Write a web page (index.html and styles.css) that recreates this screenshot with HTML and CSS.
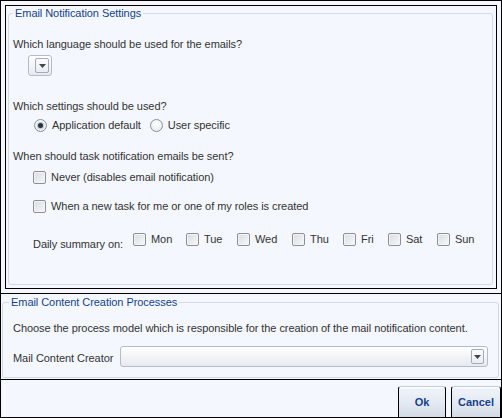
FILE: index.html
```html
<!DOCTYPE html>
<html>
<head>
<meta charset="utf-8">
<link rel="stylesheet" href="styles.css">
</head>
<body>
<div class="win">
  <div class="top">
    <div class="panel">
      <fieldset class="fs fs1">
        <legend>Email Notification Settings</legend>
        <div class="q q-lang">Which language should be used for the emails?</div>
        <div class="combo combo-small"><span class="trigger"><svg width="7" height="4" viewBox="0 0 7 4"><path d="M0 0h7L3.5 4z" fill="#444"/></svg></span></div>
        <div class="q q-settings">Which settings should be used?</div>
        <div class="radios">
          <label class="radio checked"><span class="rb"></span>Application default</label>
          <label class="radio"><span class="rb"></span>User specific</label>
        </div>
        <div class="q q-when">When should task notification emails be sent?</div>
        <label class="check c-never"><span class="cb"></span>Never (disables email notification)</label>
        <label class="check c-new"><span class="cb"></span>When a new task for me or one of my roles is created</label>
        <div class="daily">
          <span class="daily-label">Daily summary on:</span>
          <div class="days">
            <label class="check day"><span class="cb"></span>Mon</label>
            <label class="check day"><span class="cb"></span>Tue</label>
            <label class="check day"><span class="cb"></span>Wed</label>
            <label class="check day"><span class="cb"></span>Thu</label>
            <label class="check day"><span class="cb"></span>Fri</label>
            <label class="check day"><span class="cb"></span>Sat</label>
            <label class="check day"><span class="cb"></span>Sun</label>
          </div>
        </div>
      </fieldset>
    </div>
  </div>
  <div class="mid">
    <fieldset class="fs fs2">
      <legend>Email Content Creation Processes</legend>
      <div class="q q-choose">Choose the process model which is responsible for the creation of the mail notification content.</div>
      <div class="row-creator">
        <span class="lbl">Mail Content Creator</span>
        <div class="combo combo-wide"><span class="trigger"><svg width="7" height="4" viewBox="0 0 7 4"><path d="M0 0h7L3.5 4z" fill="#444"/></svg></span></div>
      </div>
    </fieldset>
  </div>
  <div class="foot">
    <button class="btn btn-ok">Ok</button>
    <button class="btn btn-cancel">Cancel</button>
  </div>
</div>
</body>
</html>
```

FILE: styles.css
```css
* { box-sizing: border-box; }
html, body { margin: 0; padding: 0; }
body {
  width: 502px;
  height: 418px;
  background: #f4f7fe;
  font-family: "Liberation Sans", Arial, sans-serif;
  font-size: 11px;
  letter-spacing: -0.06px;
  color: #333;
}
.win {
  width: 502px;
  height: 418px;
  border: 1px solid #000;
  background: #f4f7fe;
  display: flex;
  flex-direction: column;
}
.top {
  padding: 4px;
  border-bottom: 1px solid #000;
}
.panel {
  height: 284px;
  border: 1px solid #000;
  padding: 1px 3px 3px 2px;
  display: flex;
}
.fs {
  margin: 0;
  border: 1px solid #d3dae4;
  border-radius: 3px;
  min-width: 0;
}
.fs legend {
  color: #15428b;
  font-size: 11px;
  line-height: 12px;
  padding: 0 2px;
  margin-left: 0;
}
.fs1 {
  flex: 1;
  padding: 0 4px;
  display: flex;
  flex-direction: column;
  align-items: flex-start;
}
.q {
  line-height: 13px;
  white-space: nowrap;
}
.q-lang { margin-top: 19px; }
.combo {
  border: 1px solid #b5bcc8;
  border-radius: 3px;
  background: linear-gradient(#ffffff, #e6eaf0);
  display: flex;
  align-items: center;
  justify-content: flex-end;
  padding-right: 2px;
}
.combo-small {
  margin-top: 4px;
  margin-left: 15px;
  width: 24px;
  height: 21px;
}
.trigger {
  width: 14px;
  height: 15px;
  border: 1px solid #a3abb8;
  border-radius: 2px;
  background: linear-gradient(#fbfcfe, #e9edf3);
  display: flex;
  align-items: center;
  justify-content: center;
}
.q-settings { margin-top: 24px; }
.radios {
  margin-top: 6px;
  margin-left: 21px;
  display: flex;
  align-items: center;
  line-height: 13px;
}
.radio {
  display: flex;
  align-items: center;
  margin-right: 9px;
  white-space: nowrap;
}
.rb {
  width: 13px;
  height: 13px;
  border-radius: 50%;
  border: 1px solid #8b8f96;
  background: radial-gradient(circle at 50% 40%, #ffffff 0%, #e4e6ea 100%);
  margin-right: 5px;
  display: flex;
  align-items: center;
  justify-content: center;
}
.radio.checked .rb::after {
  content: "";
  width: 5px;
  height: 5px;
  border-radius: 50%;
  background: #2c3340;
  box-shadow: 0 0 1px 1px #b9c0cc;
}
.q-when { margin-top: 18px; }
.check {
  display: flex;
  align-items: center;
  line-height: 13px;
  white-space: nowrap;
}
.cb {
  width: 13px;
  height: 13px;
  border: 1px solid #8b8f96;
  border-radius: 2px;
  background: linear-gradient(135deg, #d9dbde, #f7f8f9);
  box-shadow: inset 0 0 0 1px #f4f5f6;
  margin-right: 5px;
  flex: none;
}
.c-never { margin-top: 8px; margin-left: 20px; }
.c-new { margin-top: 16px; margin-left: 20px; }
.daily {
  margin-top: 20px;
  margin-left: 20px;
  display: flex;
  align-items: flex-start;
}
.daily-label {
  line-height: 13px;
  margin-top: 5px;
  width: 100px;
  white-space: nowrap;
}
.days {
  display: grid;
  grid-template-columns: 53px 51px 55px 51px 45px 49px auto;
}
.mid {
  padding: 2px 2px 1px 1px;
  border-bottom: 1px solid #000;
  height: 86px;
  display: flex;
}
.fs2 {
  flex: 1;
  padding: 0 4px 0 10px;
}
.fs2 legend { margin-left: -4px; }
.q-choose { margin-top: 14px; }
.row-creator {
  margin-top: 11px;
  display: flex;
  align-items: center;
}
.lbl {
  width: 107px;
  white-space: nowrap;
  line-height: 13px;
  padding-top: 3px;
}
.combo-wide {
  width: 368px;
  height: 21px;
  padding-right: 3px;
}
.combo-wide .trigger { width: 13px; height: 15px; }
.foot {
  flex: 1;
  display: flex;
  justify-content: flex-end;
  align-items: flex-end;
  gap: 5px;
}
.btn {
  height: 31px;
  margin: 0;
  padding: 0;
  font-family: "Liberation Sans", Arial, sans-serif;
  font-size: 11px;
  font-weight: bold;
  letter-spacing: 0;
  color: #15428b;
  border-style: solid;
  border-width: 1px 1px 0 1px;
  border-color: #c3ccd8 #000 #000 #000;
  border-radius: 3px 3px 0 0;
  background: linear-gradient(#ffffff 0px, #e7eef8 3px, #eef2f8 4px, #e2e8f1 60%, #d3dbe6 100%);
  box-shadow: inset 0 1px 0 #ffffff;
}
.btn-ok { width: 48px; }
.btn-cancel { width: 50px; }
```
